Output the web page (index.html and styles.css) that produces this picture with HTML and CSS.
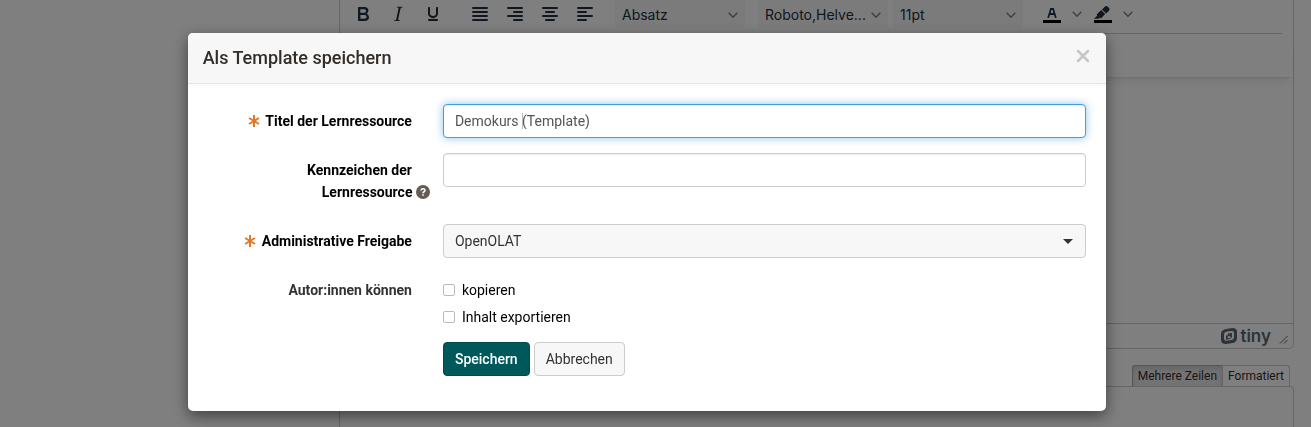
FILE: index.html
```html
<!DOCTYPE html>
<html lang="de">
<head>
    <meta charset="UTF-8">
    <meta name="viewport" content="width=device-width, initial-scale=1.0">
    <title>Als Template speichern</title>
    <link rel="stylesheet" href="styles.css">
</head>
<body>
<div class="page">
    <div class="editor">
        <div class="toolbar">
            <div class="tool-group">
                <button type="button" class="tool" aria-label="Fett">
                    <svg width="24" height="24" viewBox="0 0 24 24"><path d="M7.8 19c-.3 0-.5 0-.6-.2l-.2-.5V5.7c0-.2 0-.4.2-.5l.6-.2h5c1.5 0 2.7.3 3.5 1 .7.6 1.1 1.4 1.1 2.5a3 3 0 0 1-.6 1.9c-.4.6-1 1-1.6 1.2.4.1.9.3 1.3.6s.8.7 1 1.2c.4.4.5 1 .5 1.6 0 1.3-.4 2.3-1.3 3-.8.7-2.1 1-3.8 1H7.8Zm5-8.3c.6 0 1.2-.1 1.6-.5.4-.3.6-.7.6-1.3 0-1.1-.8-1.7-2.3-1.7H9.3v3.5h3.4Zm.5 6c.7 0 1.3-.1 1.7-.4.4-.4.6-.9.6-1.5s-.2-1-.7-1.4c-.4-.3-1-.4-2-.4H9.4v3.8h4Z" fill-rule="evenodd"/></svg>
                </button>
                <button type="button" class="tool" aria-label="Kursiv">
                    <svg width="24" height="24" viewBox="0 0 24 24"><path d="m16.7 4.7-.1.9h-.3c-.6 0-1 0-1.4.3-.3.3-.4.6-.5 1.1l-2.1 9.8v.6c0 .5.4.8 1.4.8h.2l-.2.8H8l.2-.8h.2c1.1 0 1.8-.5 2-1.5l2-9.8.1-.5c0-.6-.4-.8-1.4-.8h-.3l.2-.9h5.8Z"/></svg>
                </button>
                <button type="button" class="tool" aria-label="Unterstrichen">
                    <svg width="24" height="24" viewBox="0 0 24 24"><path d="M16 5c.6 0 1 .4 1 1v5.5a4 4 0 0 1-.4 1.8l-1 1.4a5.300 5.300 0 0 1-5.500 1 5 5 0 0 1-1.600-1c-.5-.4-.8-.9-1.100-1.400a4 4 0 0 1-.4-1.800V6c0-.6.4-1 1-1s1 .4 1 1v5.500c0 .3 0 .6.200 1l.6.700a3.300 3.300 0 0 0 2.200.8 3.400 3.400 0 0 0 2.200-.8c.3-.2.4-.5.6-.8l.2-.9V6c0-.6.4-1 1-1ZM8 17h8c.6 0 1 .4 1 1s-.4 1-1 1H8a1 1 0 0 1 0-2Z"/></svg>
                </button>
            </div>
            <div class="tool-group">
                <button type="button" class="tool" aria-label="Blocksatz">
                    <svg width="24" height="24" viewBox="0 0 24 24"><path class="lines" d="M5 6h14M5 10h14M5 14h14M5 18h14"/></svg>
                </button>
                <button type="button" class="tool" aria-label="Rechtsbündig">
                    <svg width="24" height="24" viewBox="0 0 24 24"><path class="lines" d="M5 6h14M11 10h8M5 14h14M11 18h8"/></svg>
                </button>
                <button type="button" class="tool" aria-label="Zentriert">
                    <svg width="24" height="24" viewBox="0 0 24 24"><path class="lines" d="M5 6h14M8 10h8M5 14h14M8 18h8"/></svg>
                </button>
                <button type="button" class="tool" aria-label="Linksbündig">
                    <svg width="24" height="24" viewBox="0 0 24 24"><path class="lines" d="M5 6h14M5 10h8M5 14h14M5 18h8"/></svg>
                </button>
            </div>
            <div class="tool-group">
                <button type="button" class="tool-select">Absatz
                    <svg width="10" height="10" viewBox="0 0 10 10"><path class="chevron" d="M0.700 2.800 5 7.200 9.300 2.800"/></svg>
                </button>
            </div>
            <div class="tool-group tool-group-fonts">
                <button type="button" class="tool-select">Roboto,Helve...
                    <svg width="10" height="10" viewBox="0 0 10 10"><path class="chevron" d="M0.700 2.800 5 7.200 9.300 2.800"/></svg>
                </button>
                <button type="button" class="tool-select">11pt
                    <svg width="10" height="10" viewBox="0 0 10 10"><path class="chevron" d="M0.700 2.800 5 7.200 9.300 2.800"/></svg>
                </button>
            </div>
            <div class="tool-group">
                <button type="button" class="tool tool-split" aria-label="Textfarbe">
                    <svg width="24" height="24" viewBox="0 0 24 24"><path class="color-bar" d="M3 18h18v3H3z"/><path d="M8.700 16h-.8a.5.5 0 0 1-.5-.600l2.700-9c.1-.3.300-.4.500-.4h2.800c.2 0 .4.100.5.400l2.700 9a.5.500 0 0 1-.5.600h-.8a.5.500 0 0 1-.400-.400l-.7-2.200c0-.3-.3-.4-.500-.4h-3.400c-.2 0-.4.100-.5.400l-.7 2.200c0 .3-.2.4-.4.400Zm2.600-7.600-.6 2a.5.500 0 0 0 .5.600h1.600a.5.500 0 0 0 .5-.6l-.6-2c0-.3-.3-.4-.5-.4h-.4c-.2 0-.4.100-.5.400Z" fill-rule="evenodd"/></svg>
                    <svg width="10" height="10" viewBox="0 0 10 10"><path class="chevron" d="M0.700 2.800 5 7.200 9.300 2.800"/></svg>
                </button>
                <button type="button" class="tool tool-split" aria-label="Hintergrundfarbe">
                    <svg width="24" height="24" viewBox="0 0 24 24"><path class="color-bar" d="M3 18h18v3H3z"/><path d="M7.700 16.700H3l3.300-3.300-.7-.8L10.200 8l4 4.100-4 4.200c-.2.200-.6.200-.8 0l-.6-.7-1.100 1.100Zm5-7.500L11 7.400l3-2.900a2 2 0 0 1 2.600 0L18 6c.7.700.7 2 0 2.700l-2.900 2.900-1.800-1.800-.5-.6"/></svg>
                    <svg width="10" height="10" viewBox="0 0 10 10"><path class="chevron" d="M0.700 2.800 5 7.200 9.300 2.800"/></svg>
                </button>
            </div>
        </div>
        <div class="toolbar-second"></div>
        <div class="editor-content"></div>
        <div class="statusbar">
            <svg width="16" height="16" viewBox="0 0 16 16"><path fill-rule="evenodd" d="M5 1 11.500 0Q16 0 16 4v5.500Q16 14 12 15l-7 1Q0 16 0 12V6Q0 2 5 1ZM6 3.500Q3 4 3 6.500v4Q3 13 5.500 12.700L10 12Q13 11.500 13 9V5Q13 2.800 10.500 3ZM7 5.500 11 5v4.500L9.300 9.800V11L5 11.800V7.500L7 7.200ZM6.800 8.300v2L9.200 9.900V7.900Z"/></svg>
            <span class="brand">tiny</span>
            <svg class="resize" width="10" height="10" viewBox="0 0 10 10"><path d="M1 8.500 8.500 1M5 8.500 8.500 5"/></svg>
        </div>
    </div>

    <div class="tabs">
        <button type="button" class="tab active">Mehrere Zeilen</button>
        <button type="button" class="tab">Formatiert</button>
    </div>
    <div class="text-panel"></div>
</div>

<div class="backdrop">
    <div class="modal" role="dialog" aria-labelledby="modalTitle">
        <div class="modal-header">
            <h1 class="modal-title" id="modalTitle">Als Template speichern</h1>
            <button type="button" class="close" aria-label="Schliessen">
                <svg width="14" height="14" viewBox="0 0 14 14"><path d="M2 2l10 10M12 2 2 12"/></svg>
            </button>
        </div>

        <form class="modal-body">
            <div class="form-row">
                <label class="form-label" for="title">
                    <svg class="mandatory" width="12" height="12" viewBox="0 0 12 12"><path d="M6 0v12M1 3l10 6M11 3 1 9"/></svg>
                    Titel der Lernressource
                </label>
                <div class="field field-active">
                    <input type="text" id="title" class="input" value="Demokurs (Template)">
                </div>
            </div>

            <div class="form-row">
                <label class="form-label" for="reference">Kennzeichen der<br>Lernressource
                    <svg class="help" width="14" height="14" viewBox="0 0 14 14"><circle cx="7" cy="7" r="7"/><path d="M5 5.500Q5.200 3.800 7 3.800T9 5.300Q9 6.200 8 6.800T7 8.300M7 9.300v1.500"/></svg>
                </label>
                <div class="field">
                    <input type="text" id="reference" class="input">
                </div>
            </div>

            <div class="form-row">
                <label class="form-label" for="access">
                    <svg class="mandatory" width="12" height="12" viewBox="0 0 12 12"><path d="M6 0v12M1 3l10 6M11 3 1 9"/></svg>
                    Administrative Freigabe
                </label>
                <div class="field field-select">
                    <select id="access" class="input">
                        <option>OpenOLAT</option>
                    </select>
                </div>
            </div>

            <div class="form-row" role="group" aria-labelledby="authorsLabel">
                <span class="form-label muted" id="authorsLabel">Autor:innen können</span>
                <div class="checks">
                    <label class="check"><input type="checkbox"> kopieren</label>
                    <label class="check"><input type="checkbox"> Inhalt exportieren</label>
                </div>
            </div>

            <div class="form-row">
                <div class="buttons">
                    <button type="submit" class="button primary">Speichern</button>
                    <button type="button" class="button">Abbrechen</button>
                </div>
            </div>
        </form>
    </div>
</div>
</body>
</html>
```

FILE: styles.css
```css
:root {
    --primary-color: #00585a;
    --border-color: #ccc;
    --focus-color: #439fe0;
    --text-color: #332d29;
    --tool-color: #222f3e;
    --border-radius: 4px;
}

* {
    box-sizing: border-box;
}

body {
    margin: 0;
    font-family: Roboto, "Liberation Sans", sans-serif;
    font-size: 14px;
    line-height: 20px;
    color: #000;
    background: #fff;
}

button,
input,
select {
    font: inherit;
}

svg {
    flex: none;
}

/* Page behind the dialog */
.page {
    display: flex;
    flex-direction: column;
    height: 100vh;
    overflow: hidden;
    padding: 0 17px 0 339px;
}

.editor {
    border: 1px solid var(--border-color);
    border-top: none;
    border-radius: 0 0 5px 5px;
}

.toolbar {
    display: flex;
    gap: 13px;
    margin: 0 11px 0 6px;
    padding-bottom: 5px;
    border-bottom: 1px solid var(--border-color);
}

.tool-group {
    display: flex;
    gap: 1px;
}

.tool-group-fonts {
    gap: 5px;
}

.tool,
.tool-select {
    display: flex;
    align-items: center;
    justify-content: center;
    height: 28px;
    padding: 0;
    border: none;
    background: none;
    color: var(--tool-color);
    fill: currentColor;
}

.tool {
    width: 34px;
}

.tool-split {
    gap: 8px;
    width: 50px;
}

.tool-select {
    justify-content: space-between;
    width: 130px;
    padding: 2px 7px 0;
    border-radius: 0 0 3px 3px;
    background: #f7f7f7;
    font-family: Inter, Roboto, sans-serif;
}

.lines {
    fill: none;
    stroke: currentColor;
    stroke-width: 2;
    stroke-linecap: round;
}

.chevron {
    fill: none;
    stroke: #7a828b;
    stroke-width: 1.5;
}

.color-bar {
    fill: #000;
}

.toolbar-second {
    height: 43px;
    box-shadow: 0 2px 2px -2px rgba(34, 47, 62, 0.2), 0 8px 8px -4px rgba(34, 47, 62, 0.1);
}

.editor-content {
    height: 246px;
}

.statusbar {
    display: flex;
    align-items: center;
    height: 25px;
    padding-right: 4px;
    border-top: 1px solid var(--border-color);
    color: #5c6670;
    fill: currentColor;
    justify-content: flex-end;
}

.brand {
    margin: 0 8px 0 3px;
    font-family: Inter, sans-serif;
    font-size: 17px;
    font-weight: 600;
}

.resize {
    align-self: flex-end;
    margin-bottom: 3px;
    fill: none;
    stroke: currentColor;
}

.tabs {
    display: flex;
    justify-content: flex-end;
    margin-top: 16px;
    padding-right: 4px;
}

.tab {
    height: 22px;
    padding: 0 5px 2px;
    border: 1px solid var(--border-color);
    border-bottom: none;
    border-radius: 0 3px 0 0;
    background: #fff;
    color: var(--text-color);
    font-size: 12px;
}

.tab.active {
    border-color: #adadad;
    border-right: none;
    border-radius: 3px 0 0 0;
    background: #e6e6e6;
    box-shadow: inset 0 3px 5px rgba(0, 0, 0, 0.125);
}

.text-panel {
    flex: 1;
    margin-top: -1px;
    border: 1px solid var(--border-color);
    border-bottom: none;
    border-radius: 4px 4px 0 0;
}

/* Dialog */
.backdrop {
    position: fixed;
    inset: 0;
    padding: 33px 17px 0 0;
    background: rgba(0, 0, 0, 0.5);
}

.modal {
    width: 71%;
    margin: 0 auto;
    border-radius: 5px;
    background: #fff;
    box-shadow: 0 5px 15px rgba(0, 0, 0, 0.5);
}

.modal-header {
    display: flex;
    align-items: flex-start;
    justify-content: space-between;
    padding: 15px;
    border-bottom: 1px solid #e5e5e5;
    border-radius: 5px 5px 0 0;
    background: #f7f7f7;
    box-shadow: 0 2px 4px rgba(0, 0, 0, 0.04);
}

.modal-title {
    margin: 0;
    font-size: 18px;
    font-weight: 500;
    line-height: 20px;
    color: var(--text-color);
}

.close {
    display: flex;
    padding: 1px;
    border: none;
    background: none;
    fill: none;
    stroke: #c6c6c6;
    stroke-width: 2.5;
    stroke-linecap: round;
}

.modal-body {
    padding: 20px 20px 35px;
}

.form-row {
    display: grid;
    grid-template-columns: 241fr 759fr;
    column-gap: 31px;
    align-items: start;
    margin-bottom: 15px;
}

.form-row:last-child {
    margin-bottom: 0;
}

.form-label {
    padding: 6px 0;
    font-weight: 700;
    line-height: 22px;
    text-align: right;
}

.form-label.muted {
    padding-bottom: 0;
    color: #333;
}

.mandatory {
    margin-right: 2px;
    vertical-align: -1px;
    fill: none;
    stroke: #e0782a;
    stroke-width: 2;
}

.help {
    margin-right: -18px;
    vertical-align: -2px;
    fill: #675c55;
}

.help path {
    fill: none;
    stroke: #fff;
    stroke-width: 1.6;
}

.field {
    position: relative;
}

.input {
    display: block;
    width: 100%;
    height: 34px;
    padding: 6px 11px;
    border: 1px solid var(--border-color);
    border-radius: var(--border-radius);
    outline: none;
    background: #fff;
    color: #555;
    box-shadow: inset 0 1px 1px rgba(0, 0, 0, 0.075);
}

.field-active .input,
.input:focus {
    border-color: var(--focus-color);
    box-shadow: inset 0 1px 1px rgba(0, 0, 0, 0.075), 0 0 8px rgba(67, 159, 224, 0.6);
}

/* Text cursor */
.field-active::after {
    content: "";
    position: absolute;
    top: 9px;
    left: 79px;
    width: 1px;
    height: 16px;
    background: #bbb;
}

.field-select .input {
    appearance: none;
    background: #f7f7f7;
    color: #333;
    box-shadow: none;
}

.field-select::after {
    content: "";
    position: absolute;
    top: 15px;
    right: 13px;
    border: 5px solid transparent;
    border-top-color: #333;
    border-bottom: none;
    pointer-events: none;
}

.checks {
    display: grid;
    gap: 7px;
    padding-top: 7px;
}

.check {
    display: flex;
    align-items: center;
    gap: 7px;
}

.check input {
    appearance: none;
    width: 12px;
    height: 12px;
    margin: 0;
    border: 1px solid #bbb;
    border-radius: 2px;
    background: #fff;
}

.check input:checked {
    background: var(--primary-color);
}

.buttons {
    grid-column: 2;
    display: flex;
    gap: 4px;
}

.button {
    padding: 6px 11px;
    border: 1px solid var(--border-color);
    border-radius: var(--border-radius);
    background: #f7f7f7;
    color: #333;
    cursor: pointer;
}

.button.primary {
    border-color: #004a4c;
    background: var(--primary-color);
    color: #fff;
    font-weight: 500;
}
```
